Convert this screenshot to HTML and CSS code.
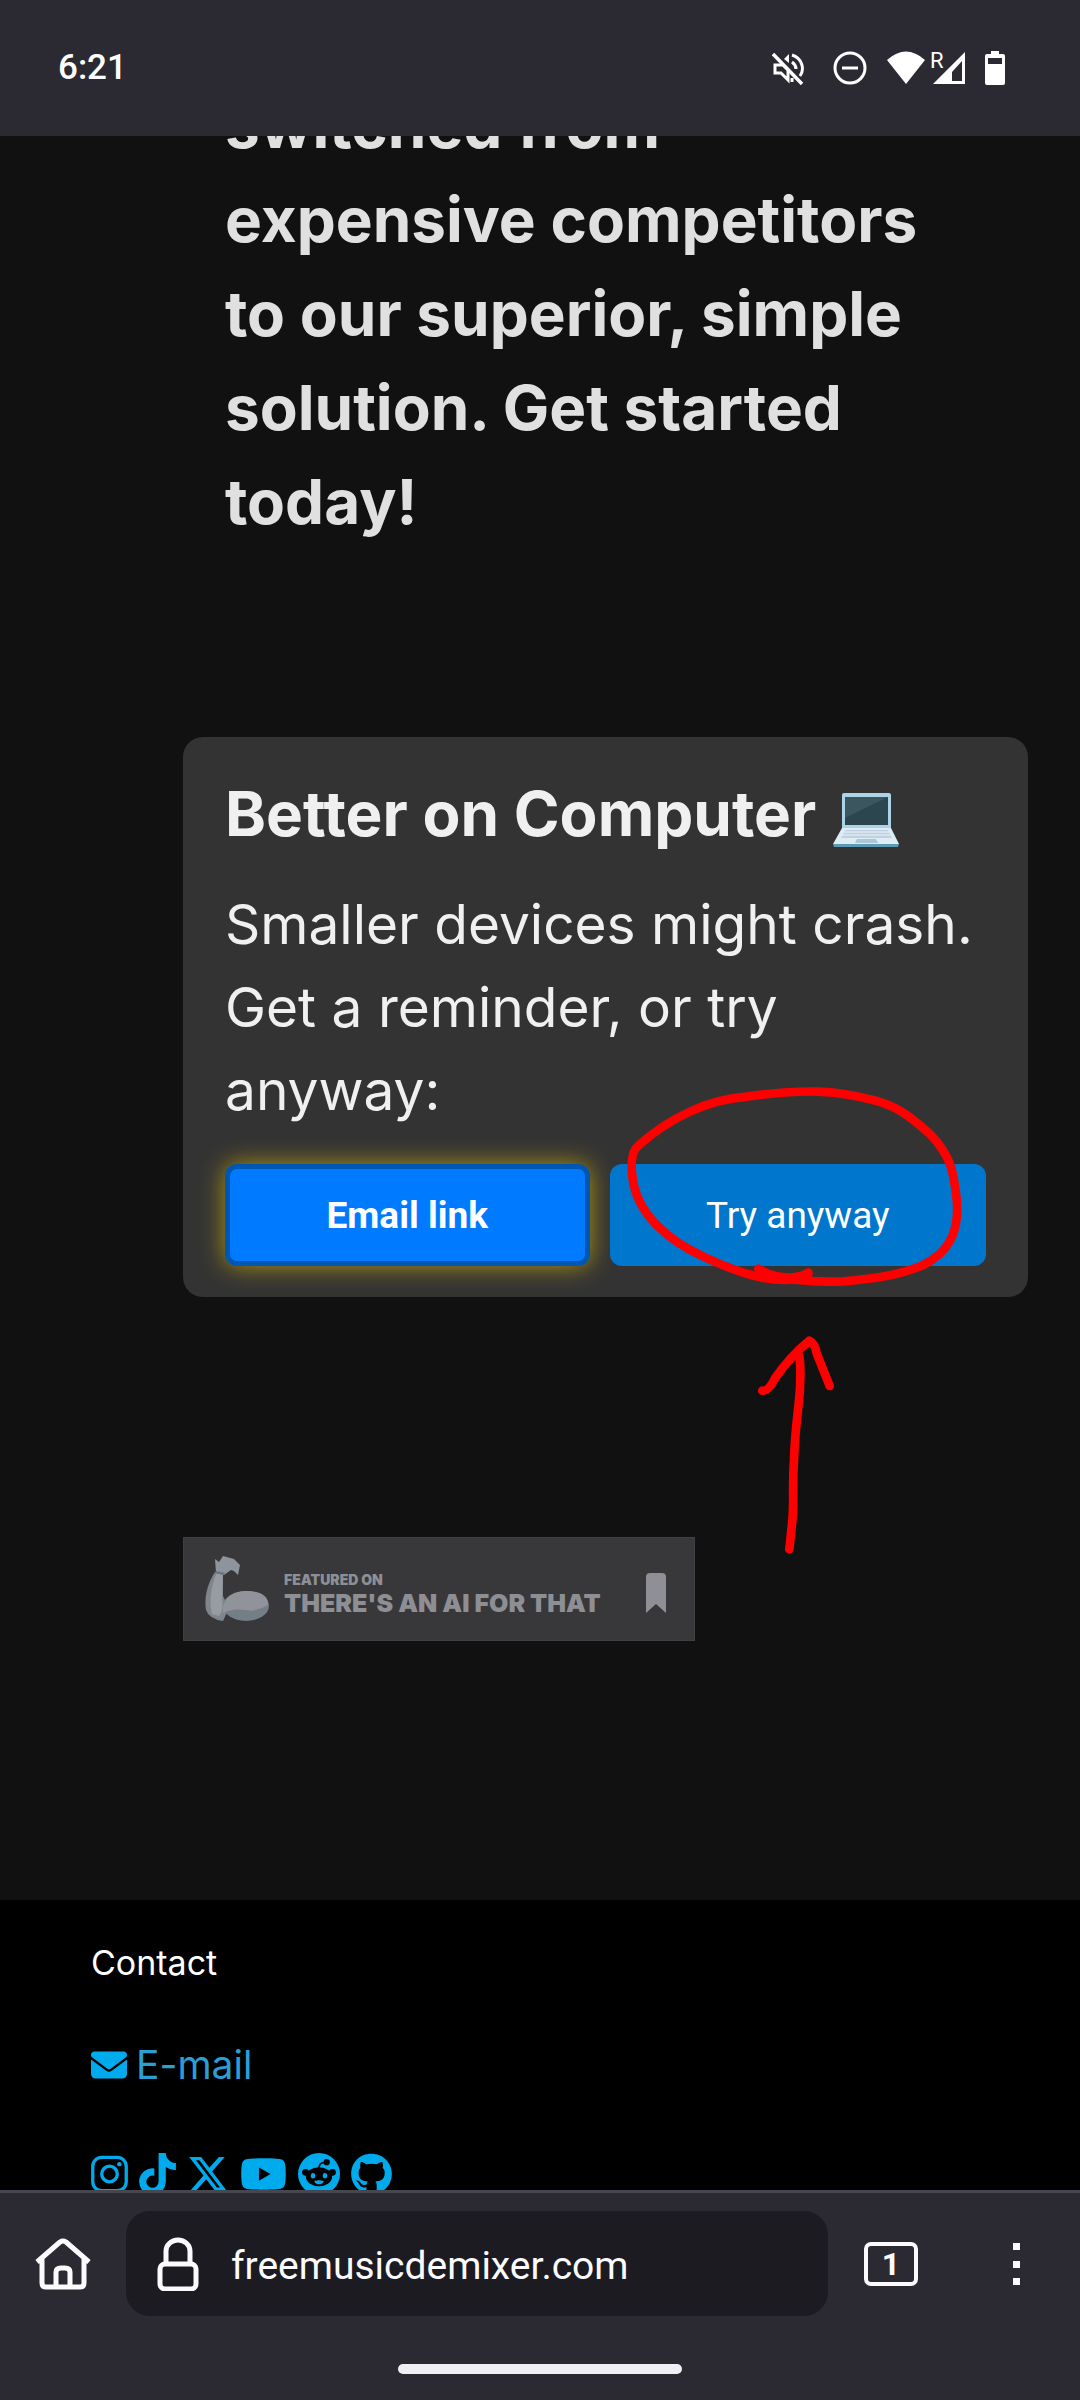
FILE: index.html
```html
<!DOCTYPE html>
<html lang="en">
<head>
<meta charset="utf-8">
<meta name="viewport" content="width=device-width, initial-scale=1">
<title>Free Music Demixer</title>
<link rel="stylesheet" href="styles.css">
</head>
<body>
<header class="status">
  <time class="clock">6:21</time>
  <div class="status-icons">
    <svg class="ic-mute" width="32" height="34" viewBox="0 0 32 34" fill="none" stroke="#fff" stroke-width="3"><path d="M1 3l29 30" stroke-width="3.500"/><path d="M3 14v8h6l7 7V19L11 14z" stroke-width="3"/><path d="M12 8l5-5v9z" fill="#fff" stroke="none"/><path d="M20 11q4 3 4 7M20 4c10 3 13 14 8 21M20 27v4"/></svg>
    <svg width="34" height="34" viewBox="0 0 34 34" fill="none" stroke="#fff" stroke-width="3"><circle cx="17" cy="17" r="15"/><path d="M9 17h16"/></svg>
    <div class="network">
      <svg width="40" height="34" viewBox="0 0 40 34"><path d="M1 9Q20-8 39 9L20 33z" fill="#fff"/></svg>
      <svg class="signal" width="36" height="34" viewBox="0 0 36 34"><path d="M35 1v32H3z" fill="#fff"/><path d="M32 10v20H22V21z" fill="#2b2a33"/><text x="0" y="17" class="roaming">R</text></svg>
    </div>
    <svg width="20" height="34" viewBox="0 0 20 34"><path d="M6 0h8v3h4q2 0 2 2v27q0 2-2 2H2q-2 0-2-2V5q0-2 2-2h4z" fill="#fff"/><path d="M3 7h14v6H3z" fill="#2b2a33"/></svg>
  </div>
</header>

<main class="viewport">
  <div class="page">
    <h2 class="pitch">switched from<br>expensive competitors<br>to our superior, simple<br>solution. Get started<br>today!</h2>

    <section class="card">
      <h3 class="card-title">Better on Computer
        <svg class="laptop" width="66" height="56" viewBox="0 0 66 56" role="img" aria-label="laptop"><path d="M9 2q0-2 2-2h45q2 0 2 2v34H9z" fill="#acd3e6"/><path d="M12 4h43v28H12z" fill="#2b464e"/><path d="M12 4h43L12 25z" fill="#3b565e"/><path d="M9 35h49l8 16H0z" fill="#deecf5"/><path d="M12 37h43l4 8H8z" fill="#bfd2df"/><path d="M10 39h47M9 42h49" stroke="#e9f4fb"/><path d="M24 46h19l2 4H22z" fill="#a9c8d8"/><path d="M0 51h66l-1 3H1z" fill="#5b9bb5"/></svg>
      </h3>
      <p class="card-text">Smaller devices might crash.<br>Get a reminder, or try<br>anyway:</p>
      <div class="actions">
        <button class="btn btn-email" type="button">Email link</button>
        <button class="btn btn-try" type="button">Try anyway</button>
      </div>
      <svg class="scribble" width="460" height="520" viewBox="0 0 1380 1560" aria-hidden="true"><path d="M595 626C630 650 700 665 745 638M745 638Q745 655 715 657C630 670 540 640 435 592C320 540 230 460 217 350Q209 280 232 260C330 170 450 118 560 110C740 85 830 92 930 118C1020 138 1060 180 1110 222C1180 295 1180 350 1188 400C1205 520 1160 580 1090 615C1010 650 920 658 850 664Q720 670 600 640M607 992Q625 995 645 955C680 905 720 865 748 842Q765 850 770 880L809 978M717 885Q723 905 720 985C715 1060 705 1100 702 1200C695 1300 705 1330 694 1410L688 1468"/></svg>
    </section>

    <a class="badge" href="#featured">
      <svg width="64" height="66" viewBox="0 0 64 66"><path d="M10 16C2 28-1 43 1 54Q4 63 18 65L24 52 18 40V16z" fill="#7f858d"/><path d="M12 16C6 30 4 45 7 58L14 60Q19 54 17 42L18 16z" fill="#979ca3"/><ellipse cx="41" cy="50" rx="23" ry="15" fill="#747e87"/><path d="M18 50C21 40 29 35 42 35S64 40 63 49Q52 56 40 54T18 57z" fill="#909399"/><path d="M11 17L10 3l4 3 4-6 11 3 6 6-2 10-4-4-3-1-7 5z" fill="#8e949b"/><path d="M11 15l9 2-2 2-8-2z" fill="#69717a"/></svg>
      <span class="badge-text"><small>FEATURED ON</small><strong>THERE'S AN AI FOR THAT</strong></span>
      <svg class="bookmark" width="20" height="40" viewBox="0 0 20 40"><path d="M0 4q0-4 4-4h12q4 0 4 4v36L10 31 0 40z" fill="#8e9095"/></svg>
    </a>
  </div>

  <footer class="footer">
    <p class="contact">Contact</p>
    <a class="mail" href="#mail"><svg width="36" height="36" viewBox="0 0 512 512"><path d="M48 64C21.500 64 0 85.500 0 112c0 15.100 7.100 29.300 19.200 38.400L236.800 313.600c11.400 8.500 27 8.500 38.400 0L492.800 150.400c12.100-9.100 19.200-23.300 19.200-38.400c0-26.500-21.500-48-48-48H48zM0 176V384c0 35.300 28.700 64 64 64H448c35.300 0 64-28.700 64-64V176L294.400 339.200c-22.800 17.100-54 17.100-76.800 0L0 176z"/></svg>E-mail</a>
    <nav class="social" aria-label="Social links">
      <a href="#instagram" aria-label="Instagram"><svg width="37" height="42" viewBox="0 0 448 512"><rect x="20" y="52" width="408" height="408" rx="110" fill="none" stroke="#00abed" stroke-width="40"/><circle cx="224" cy="256" r="95" fill="none" stroke="#00abed" stroke-width="40"/><circle cx="344" cy="136" r="27"/></svg></a>
      <a href="#tiktok" aria-label="TikTok"><svg width="37" height="42" viewBox="0 0 448 512"><path d="M448 209.910a210.060 210.060 0 0 1-122.770-39.250V349.380A162.550 162.550 0 1 1 185 188.310V278.200a74.620 74.620 0 1 0 52.230 71.180V0l88 0a121.180 121.180 0 0 0 1.860 22.170A122.180 122.180 0 0 0 381 102.390a121.430 121.430 0 0 0 67 20.140z"/></svg></a>
      <a href="#x" aria-label="X"><svg width="42" height="42" viewBox="0 0 512 512"><path d="M389.200 48h70.600L305.600 224.200 487 464H345L233.700 318.600 106.500 464H35.800L200.700 275.500 26.800 48H172.400L272.900 180.900 389.200 48zM364.400 421.800h39.100L151.100 88h-42L364.400 421.800z"/></svg></a>
      <a href="#youtube" aria-label="YouTube"><svg width="47" height="42" viewBox="0 0 576 512"><path d="M549.655 124.083c-6.281-23.650-24.787-42.276-48.284-48.597C458.781 64 288 64 288 64S117.220 64 74.629 75.486c-23.497 6.322-42.003 24.947-48.284 48.597-11.412 42.867-11.412 132.305-11.412 132.305s0 89.438 11.412 132.305c6.281 23.650 24.787 41.500 48.284 47.821C117.220 448 288 448 288 448s170.780 0 213.371-11.486c23.497-6.321 42.003-24.171 48.284-47.821 11.412-42.867 11.412-132.305 11.412-132.305s0-89.438-11.412-132.305zm-317.510 213.508V175.185l142.739 81.205-142.739 81.201z"/></svg></a>
      <a href="#reddit" aria-label="Reddit"><svg width="42" height="42" viewBox="0 0 512 512"><circle cx="256" cy="256" r="256"/><g fill="#000"><ellipse cx="256" cy="290" rx="160" ry="115"/><circle cx="92" cy="236" r="42"/><circle cx="420" cy="236" r="42"/><circle cx="350" cy="112" r="38"/></g><path d="M256 186q0-66 64-70" fill="none" stroke="#000" stroke-width="20"/><ellipse cx="183" cy="278" rx="27" ry="34"/><ellipse cx="329" cy="278" rx="27" ry="34"/><path d="M197 340q59-14 118 0-16 42-59 42t-59-42z"/></svg></a>
      <a href="#github" aria-label="GitHub"><svg width="41" height="42" viewBox="0 0 496 512"><path d="M244.800 8C106.100 8 0 113.300 0 252c0 110.900 69.800 205.800 169.500 239.200 12.800 2.300 17.300-5.600 17.300-12.100 0-6.200-.3-40.400-.3-61.400 0 0-70 15-84.700-29.800 0 0-11.400-29.100-27.800-36.600 0 0-22.900-15.700 1.600-15.400 0 0 24.900 2 38.600 25.800 21.900 38.600 58.600 27.500 72.900 20.900 2.300-16 8.800-27.100 16-33.700-55.900-6.200-112.300-14.300-112.300-110.500 0-27.500 7.600-41.300 23.600-58.900-2.600-6.500-11.100-33.300 2.600-67.900 20.900-6.500 69 27 69 27 20-5.600 41.500-8.500 62.800-8.500s42.800 2.900 62.800 8.500c0 0 48.100-33.600 69-27 13.700 34.700 5.200 61.400 2.600 67.900 16 17.700 25.800 31.500 25.800 58.900 0 96.500-58.900 104.200-114.800 110.500 9.200 7.900 17 22.900 17 46.400 0 33.700-.3 75.400-.3 83.600 0 6.500 4.600 14.400 17.300 12.100C428.200 457.800 496 362.900 496 252 496 113.300 383.500 8 244.800 8z"/></svg></a>
    </nav>
  </footer>
</main>

<div class="browser">
  <div class="toolbar">
    <button class="tool" type="button" aria-label="Home"><svg width="56" height="52" viewBox="0 0 56 52" fill="none" stroke="#fbfbfe" stroke-width="5" stroke-linejoin="round"><path d="M2 24L25 4q3-2 6 0l23 20M7 21v24q0 4 4 4h34q4 0 4-4V21M21 49V34q0-4 5-4h4q5 0 5 4v15"/></svg></button>
    <label class="url">
      <svg width="42" height="54" viewBox="0 0 42 54" fill="none" stroke="#fbfbfe" stroke-width="5"><rect x="3" y="27" width="36" height="25" rx="5"/><path d="M9 26V14a12 11 0 0 1 24 0v12"/></svg>
      <input type="text" value="freemusicdemixer.com" aria-label="Address">
    </label>
    <button class="tool" type="button" aria-label="Tabs"><span class="tabs">1</span></button>
    <button class="tool" type="button" aria-label="Menu"><svg width="8" height="44" viewBox="0 0 8 44" fill="#fbfbfe"><rect y="1" width="7" height="7"/><rect y="19" width="7" height="7"/><rect y="36" width="7" height="7"/></svg></button>
  </div>
  <div class="handle"></div>
</div>
</body>
</html>
```
FILE: styles.css
```css
* { box-sizing: border-box; }

body {
  margin: 0;
  height: 100vh;
  display: flex;
  flex-direction: column;
  overflow: hidden;
  background: #111;
  color: #f0f0f0;
  font-family: Inter, sans-serif;
}

h2, h3, p { margin: 0; }
svg { display: block; flex: none; }
button, input { font-family: Roboto, sans-serif; border: 0; padding: 0; }

/* Phone status bar */
.status {
  flex: none;
  height: 136px;
  padding: 0 75px 0 58px;
  display: flex;
  align-items: center;
  justify-content: space-between;
  background: #2b2a33;
  color: #fff;
}
.clock { font: 500 35px/40px Roboto, sans-serif; }
.status-icons { display: flex; align-items: center; gap: 19px; }
.ic-mute { margin-right: 10px; }
.network { display: flex; gap: 4px; }
.signal { overflow: visible; }
.roaming { font: 22px Roboto, sans-serif; fill: #fff; }

/* Scrolled web page */
.viewport { flex: 1; min-height: 0; overflow: hidden; display: flex; flex-direction: column; }
.page {
  flex: none;
  margin-top: -57px;
  padding: 0 52px 259px 183px;
}
.pitch {
  padding: 0 42px;
  font-size: 62px;
  line-height: 94px;
  font-weight: 700;
  color: #e0e0e0;
  white-space: nowrap;
}
.card {
  position: relative;
  margin-top: 188px;
  padding: 30px 42px 31px;
  border-radius: 20px;
  background: #333;
}
.card-title {
  display: flex;
  align-items: center;
  gap: 17px;
  font-size: 62px;
  line-height: 94px;
  font-weight: 700;
  white-space: nowrap;
}
.laptop { margin-top: 14px; }
.card-text {
  margin-top: 22px;
  font-size: 55px;
  line-height: 83px;
  white-space: nowrap;
}
.actions { margin-top: 32px; display: flex; gap: 20px; }
.btn {
  flex: 1 1 auto;
  height: 102px;
  border-radius: 12px;
  font-size: 37px;
  color: #fff;
}
.btn-email {
  border: 5px solid #0056b3;
  background: #007bff;
  font-weight: 700;
  box-shadow: 0 0 24px rgba(255, 215, 0, .6);
}
.btn-try { background: #0077cc; }
.scribble {
  position: absolute;
  right: 8px;
  bottom: -283px;
  fill: none;
  stroke: #f00;
  stroke-width: 26px;
  stroke-linecap: round;
  stroke-linejoin: round;
  pointer-events: none;
}
.badge {
  margin-top: 240px;
  width: 512px;
  height: 104px;
  padding: 0 28px 0 21px;
  display: flex;
  align-items: center;
  border: 1px solid #404042;
  background: #38383a;
  color: #8e8f94;
  text-decoration: none;
}
.badge-text { display: flex; flex-direction: column; margin: 12px auto 0 15px; white-space: nowrap; }
.badge-text small { font: 900 14px/16px Inter, sans-serif; }
.badge-text strong { font: 900 25px/30px Inter, sans-serif; }
.bookmark { margin-top: 8px; }

.footer { flex: none; padding: 39px 91px 60px; background: #000; }
.contact { font-size: 34px; line-height: 48px; color: #fff; }
.mail {
  display: flex;
  align-items: center;
  gap: 9px;
  margin-top: 50px;
  font-size: 39px;
  line-height: 56px;
  color: #2a9fd6;
  text-decoration: none;
}
.mail svg, .social svg { fill: #00abed; }
.social { display: flex; gap: 11px; margin-top: 60px; }

/* Browser chrome */
.browser {
  flex: none;
  border-top: 3px solid #48474f;
  padding-bottom: 26px;
  background: #2b2a33;
}
.toolbar { display: flex; align-items: center; padding-top: 18px; }
.tool {
  width: 126px;
  height: 105px;
  display: flex;
  align-items: center;
  justify-content: center;
  background: none;
  color: #fbfbfe;
}
.url {
  flex: 1;
  min-width: 0;
  height: 105px;
  padding: 0 31px;
  display: flex;
  align-items: center;
  gap: 32px;
  border-radius: 24px;
  background: #1c1b22;
}
.url input {
  flex: 1;
  min-width: 0;
  padding-top: 4px;
  background: none;
  color: #fbfbfe;
  font-size: 39px;
}
.tabs {
  width: 54px;
  height: 44px;
  border: 4px solid #fbfbfe;
  border-radius: 7px;
  font: 700 32px/36px Roboto, sans-serif;
}
.handle { width: 284px; height: 10px; margin: 48px auto 0; border-radius: 5px; background: #f0eff4; }
```
